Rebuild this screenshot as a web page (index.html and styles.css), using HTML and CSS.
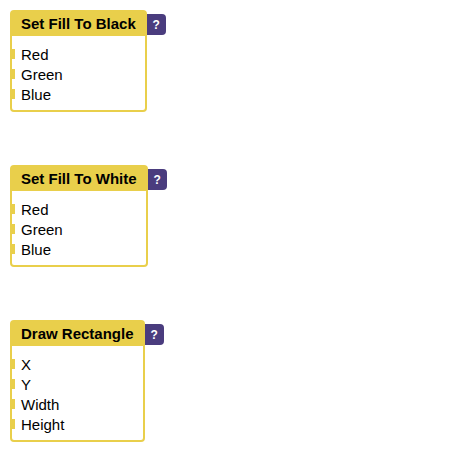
FILE: index.html
```html
<!DOCTYPE html>
<html>
<head>
<meta charset="utf-8">
<link rel="stylesheet" href="styles.css">
</head>
<body>
<div class="page">
  <div class="block">
    <div class="box">
      <div class="head">Set Fill To Black</div>
      <div class="body">
        <div class="row"><span class="tab"></span><span>Red</span></div>
        <div class="row"><span class="tab"></span><span>Green</span></div>
        <div class="row"><span class="tab"></span><span>Blue</span></div>
      </div>
    </div>
    <div class="help">?</div>
  </div>
  <div class="block">
    <div class="box">
      <div class="head">Set Fill To White</div>
      <div class="body">
        <div class="row"><span class="tab"></span><span>Red</span></div>
        <div class="row"><span class="tab"></span><span>Green</span></div>
        <div class="row"><span class="tab"></span><span>Blue</span></div>
      </div>
    </div>
    <div class="help">?</div>
  </div>
  <div class="block">
    <div class="box">
      <div class="head">Draw Rectangle</div>
      <div class="body">
        <div class="row"><span class="tab"></span><span>X</span></div>
        <div class="row"><span class="tab"></span><span>Y</span></div>
        <div class="row"><span class="tab"></span><span>Width</span></div>
        <div class="row"><span class="tab"></span><span>Height</span></div>
      </div>
    </div>
    <div class="help">?</div>
  </div>
</div>
</body>
</html>
```
FILE: styles.css
```css
html, body {
  margin: 0;
  padding: 0;
  background: #ffffff;
}
.page {
  padding: 10px;
  display: flex;
  flex-direction: column;
  align-items: flex-start;
  gap: 53px;
  font-family: "Liberation Sans", Arial, sans-serif;
  color: #000;
}
.block {
  display: flex;
  align-items: flex-start;
}
.box {
  border: 2px solid #e9cf4b;
  border-radius: 4px;
  background: #fff;
}
.head {
  background: #e9cf4b;
  padding: 4px 9px 4px 9px;
  font-weight: bold;
  font-size: 15px;
  line-height: 16px;
}
.body {
  padding: 8px 0 6px;
}
.row {
  display: flex;
  align-items: center;
  height: 20px;
  font-size: 15px;
}
.tab {
  width: 5px;
  height: 10px;
  margin-left: -2px;
  margin-right: 6px;
  background: #e9cf4b;
}
.help {
  margin-top: 4px;
  width: 19px;
  height: 21px;
  border-radius: 0 4px 4px 0;
  background: #4a3c7e;
  color: #fff;
  font-weight: bold;
  font-size: 12px;
  display: flex;
  align-items: center;
  justify-content: center;
}
```
